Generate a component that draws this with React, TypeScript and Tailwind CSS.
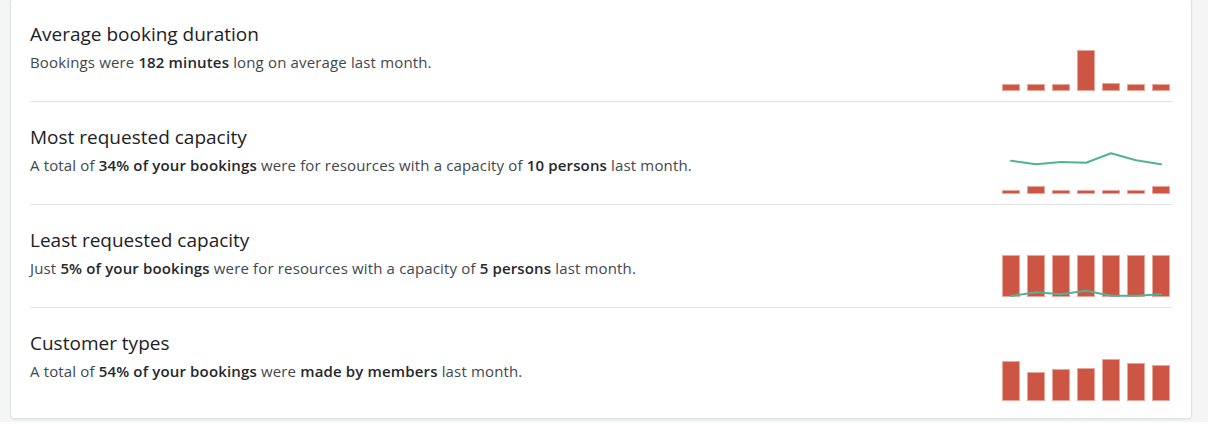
import { FC, ReactNode } from 'react';

type Point = number;

interface StatRowProps {
  title: string;
  children: ReactNode;
  bars: number[];
  line?: Point[];
  last?: boolean;
}

const BAR_W = 18;
const PITCH = 25;
const CHART_H = 42;

const MiniChart: FC<{ bars: number[]; line?: Point[] }> = ({ bars, line }) => (
  <svg width={168} height={CHART_H} viewBox={`0 0 168 ${CHART_H}`} className="block">
    {bars.map((h, i) => (
      <rect
        key={i}
        x={i * PITCH + 0.5}
        y={CHART_H - h + 0.5}
        width={BAR_W - 1}
        height={Math.max(h - 1, 1)}
        fill="#cc5543"
        stroke="#e9a79c"
        strokeWidth={1}
      />
    ))}
    {line && (
      <polyline
        points={line.map((y, i) => `${i * PITCH + 9},${y}`).join(' ')}
        fill="none"
        stroke="#52b394"
        strokeWidth={2}
        strokeLinejoin="round"
        strokeLinecap="round"
      />
    )}
  </svg>
);

const StatRow: FC<StatRowProps> = ({ title, children, bars, line, last }) => (
  <div className={`flex h-[103px] justify-between ${last ? '' : 'border-b border-[#dfe3ea]'}`}>
    <div className="pt-[23px]">
      <h3 className="text-[19px] leading-6 text-[#1e2125]">{title}</h3>
      <p className="mt-[6px] text-[15px] leading-5 tracking-[0.15px] text-[#42474d]">{children}</p>
    </div>
    <div className="mr-[2px] self-end mb-[10px]">
      <MiniChart bars={bars} line={line} />
    </div>
  </div>
);

const B: FC<{ children: ReactNode }> = ({ children }) => (
  <strong className="font-semibold text-[#25282c]">{children}</strong>
);

export default function App() {
  return (
    <div className="min-h-[424px] bg-[#f5f5f6] font-['Open_Sans',sans-serif]">
      <div className="ml-[10px] mt-[-2px] w-[1182px] rounded-[4px] border border-[#dde1e8] bg-white px-[19px] pb-[7px] shadow-[0_1px_2px_rgba(0,0,0,0.06)]">
        <StatRow title="Average booking duration" bars={[7, 7, 7, 41, 8, 7, 7]}>
          Bookings were <B>182 minutes</B> long on average last month.
        </StatRow>
        <StatRow
          title="Most requested capacity"
          bars={[4, 8, 4, 4, 4, 4, 8]}
          line={[8.7, 12.3, 10, 10.7, 1.3, 8.3, 12.3]}
        >
          A total of <B>34% of your bookings</B> were for resources with a capacity of <B>10 persons</B> last month.
        </StatRow>
        <StatRow
          title="Least requested capacity"
          bars={[42, 42, 42, 42, 42, 42, 42]}
          line={[41, 37.3, 39.3, 35.7, 40.7, 40.7, 39.3]}
        >
          Just <B>5% of your bookings</B> were for resources with a capacity of <B>5 persons</B> last month.
        </StatRow>
        <StatRow title="Customer types" bars={[40, 29, 32, 33, 42, 38, 36]} last>
          A total of <B>54% of your bookings</B> were <B>made by members</B> last month.
        </StatRow>
      </div>
    </div>
  );
}
